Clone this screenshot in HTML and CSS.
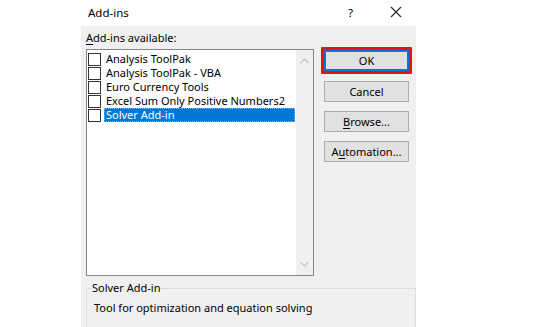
FILE: index.html
```html
<!DOCTYPE html>
<html>
<head>
<meta charset="utf-8">
<link rel="stylesheet" href="styles.css">
</head>
<body>
<div class="dialog">
  <div class="titlebar">
    <span class="title">Add-ins</span>
    <span class="help">?</span>
    <svg class="close" width="12" height="12" viewBox="0 0 12 12"><path d="M1 1L11 11M11 1L1 11" stroke="#222" stroke-width="1.1" fill="none"/></svg>
  </div>
  <div class="panel">
    <div class="main">
      <div class="left">
        <div class="label"><u>A</u>dd-ins available:</div>
        <div class="listbox">
          <div class="items">
            <div class="item"><span class="cb"></span><span class="txt">Analysis ToolPak</span></div>
            <div class="item"><span class="cb"></span><span class="txt">Analysis ToolPak - VBA</span></div>
            <div class="item"><span class="cb"></span><span class="txt">Euro Currency Tools</span></div>
            <div class="item"><span class="cb"></span><span class="txt">Excel Sum Only Positive Numbers2</span></div>
            <div class="item"><span class="cb"></span><span class="txt sel">Solver Add-in</span></div>
          </div>
          <div class="scrollbar">
            <svg width="9" height="6" viewBox="0 0 9 6"><path d="M0.5 5L4.5 1L8.5 5" stroke="#c2c2c2" stroke-width="1.2" fill="none"/></svg>
            <svg width="9" height="6" viewBox="0 0 9 6"><path d="M0.5 1L4.5 5L8.5 1" stroke="#c2c2c2" stroke-width="1.2" fill="none"/></svg>
          </div>
        </div>
      </div>
      <div class="buttons">
        <div class="highlight"><button class="btn default">OK</button></div>
        <button class="btn">Cancel</button>
        <button class="btn"><u>B</u>rowse...</button>
        <button class="btn">A<u>u</u>tomation...</button>
      </div>
    </div>
    <fieldset class="group">
      <legend>Solver Add-in</legend>
      <div class="desc">Tool for optimization and equation solving</div>
    </fieldset>
  </div>
</div>
</body>
</html>
```
FILE: styles.css
```css
html, body {
  margin: 0;
  padding: 0;
  background: #ffffff;
  height: 100%;
  overflow: hidden;
}
body {
  font-family: "Noto Sans", "Open Sans", sans-serif;
  font-size: 11px;
  color: #000;
}
.dialog {
  margin-left: 81px;
  width: 335px;
  height: 327px;
  display: flex;
  flex-direction: column;
}
.titlebar {
  height: 26px;
  background: #fff;
  display: flex;
  align-items: center;
}
.title {
  margin-left: 7px;
  font-size: 11.5px;
  margin-top: -2px;
}
.help {
  margin-left: auto;
  margin-right: 37px;
  font-size: 11.5px;
  margin-top: -2px;
}
.close {
  margin-right: 14px;
  margin-top: -2px;
}
.panel {
  flex: 1;
  background: #f0f0f0;
  display: flex;
  flex-direction: column;
  padding-left: 5px;
}
.main {
  display: flex;
}
.left {
  display: flex;
  flex-direction: column;
}
.label {
  height: 23px;
  line-height: 24px;
}
.label u {
  text-decoration-thickness: 1px;
  text-underline-offset: 2px;
}
.listbox {
  width: 226px;
  height: 225px;
  border: 1px solid #82878f;
  background: #fff;
  display: flex;
}
.items {
  flex: 1;
  padding-top: 2px;
  padding-left: 1px;
}
.item {
  display: flex;
  align-items: center;
  height: 14px;
  line-height: 14px;
}
.cb {
  width: 11px;
  height: 11px;
  border: 1px solid #333;
  background: #fff;
  flex: none;
}
.txt {
  margin-left: 3px;
  padding-left: 2px;
  line-height: 14px;
  height: 14px;
  white-space: nowrap;
}
.txt.sel {
  background: #0078d7;
  color: #fff;
  flex: 1;
  margin-right: 1px;
  outline: 1px dotted #7fb8ea;
  outline-offset: -1px;
}
.scrollbar {
  width: 17px;
  background: #f0f0f0;
  display: flex;
  flex-direction: column;
  justify-content: space-between;
  align-items: center;
  padding: 8px 0 8px;
}
.buttons {
  display: flex;
  flex-direction: column;
  gap: 9px;
  margin-left: 10px;
  margin-top: 24px;
}
.highlight {
  border: 3px solid #e8101c;
  border-radius: 1px;
  width: 85px;
  margin: -3px 0 -2px -3px;
}
.btn {
  width: 85px;
  height: 21px;
  border: 1px solid #adadad;
  background: #e1e1e1;
  font-family: "Noto Sans", "Open Sans", sans-serif;
  font-size: 11px;
  color: #000;
  padding: 0;
  display: block;
  line-height: 18px;
}
.btn.default {
  border: 1px solid #0078d7;
  outline: 1px solid #0078d7;
  outline-offset: -2px;
}
.btn u {
  text-underline-offset: 2px;
}
.group {
  margin: 5px 0 0 0;
  width: 322px;
  border: 1px solid #dcdcdc;
  border-bottom: none;
  padding: 0 0 0 6px;
  flex: 1;
}
.group legend {
  padding: 0;
  margin-left: -1px;
  line-height: 14px;
}
.desc {
  margin-top: 5px;
  margin-left: 1px;
}
```
